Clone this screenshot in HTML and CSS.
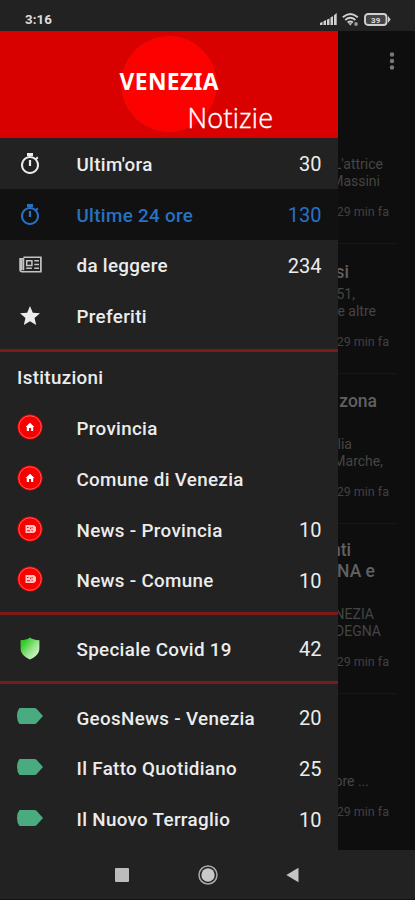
FILE: index.html
```
<!DOCTYPE html>
<html lang="it">
<head>
<meta charset="utf-8">
<title>Venezia Notizie</title>
<link rel="stylesheet" href="styles.css">
</head>
<body>
<svg class="defs" width="0" height="0">
  <defs>
    <linearGradient id="green" x1="0" y1="0" x2="1" y2="1"><stop offset=".2" stop-color="#35cb2b"/><stop offset=".6" stop-color="#a0e795"/><stop offset="1" stop-color="#e5ffdc"/></linearGradient>
    <symbol id="timer" viewBox="0 0 24 24"><path fill="currentColor" d="M15 1H9v3h6zm-4.100 13h2.200V8h-2.200zm8.130-6.610 1.420-1.420c-.43-.51-.9-.99-1.410-1.410l-1.420 1.420A8.960 8.960 0 0 0 12 4a9 9 0 1 0 7.030 3.390zM12 20a7 7 0 1 1 0-14 7 7 0 0 1 0 14z"/></symbol>
    <symbol id="paper" viewBox="0 0 24 18"><path fill="none" stroke="currentColor" stroke-width="1.800" d="M4.500 1.300H23v15.400H3a2 2 0 0 1-2-2V3h3.500v12"/><path fill="none" stroke="currentColor" stroke-width="1.600" d="M8 5h5.500v5H8zM16 5h5M16 9h5M7.500 13h6M16 13h5M2.700 4v11"/></symbol>
    <symbol id="star" viewBox="0 0 24 24"><path fill="currentColor" d="m12 17.270 6.180 3.730-1.640-7.030L22 9.240l-7.190-.61L12 2 9.190 8.630 2 9.240l5.460 4.730L5.820 21z"/></symbol>
    <symbol id="home" viewBox="0 0 26 26"><circle cx="13" cy="13" r="12.500" fill="#f60000"/><circle cx="13" cy="13" r="11.200" fill="none" stroke="#ff5a55" stroke-width="1"/><path fill="#fff" d="M13 8.800 8.600 12.900h1.200v4.100h2.200v-3h2v3h2.200v-4.100h1.200z"/></symbol>
    <symbol id="news" viewBox="0 0 26 26"><circle cx="13" cy="13" r="12.500" fill="#f60000"/><circle cx="13" cy="13" r="11.200" fill="none" stroke="#ff5a55" stroke-width="1"/><path fill="#ffc4c0" d="M8.500 9H17l2 2v4l-2 2H8.500z"/><path fill="#f60000" d="M10 11h1.500v1H10zM10 14.200h3v1h-3zM14.600 11h1v1.300h-1zM14.600 14h1v1.300h-1zM13 11.500h.8v1.500H13z"/></symbol>
    <symbol id="shield" viewBox="0 0 20 23"><path fill="url(#green)" d="M10 .5C8 2.300 4 3.300.6 3.300v8.200c0 5 4 8.500 9.400 11 5.400-2.500 9.400-6 9.400-11V3.300C16 3.300 12 2.300 10 .5z"/></symbol>
    <symbol id="tag" viewBox="0 0 26 16"><path fill="#4aab80" d="M2.500 0h15q1.300 0 2.200 1L26 8l-6.300 7q-.9 1-2.200 1h-15Q0 13 0 8t2.500-8z"/></symbol>
  </defs>
</svg>
<div class="phone">
  <header class="status">
    <span class="clock">3:16</span>
    <div class="indicators">
      <svg width="17" height="12" viewBox="0 0 17 12"><path fill="#d0d0d0" d="M0 12v-2l2.500-1.200V12zM3.500 12V8.300L6 7.100V12zM7 12V6.600l2.500-1.200V12zM10.500 12V4.600L13 3v9zM14 12V2.300L16.700 0v12z"/></svg>
      <svg width="17" height="13" viewBox="0 0 17 13"><g fill="none" stroke="#cecece" stroke-width="1.900"><path d="M.8 4.300Q8.300-2.200 15.800 4.300M3.200 7Q8.300 2.700 13.400 7M5.700 9.600q2.600-2.100 5.200 0"/></g><path fill="#cecece" d="m8.300 12.500-2-2.200h4z"/><circle cx="14" cy="11" r="1.900" fill="#999"/></svg>
      <svg width="27" height="13" viewBox="0 0 27 13"><rect x="1" y="1" width="21.500" height="11" rx="3" fill="#444" stroke="#d0d0d0" stroke-width="1.900"/><path fill="#d0d0d0" d="m24 3 2.700 3.500L24 10z"/><text x="11.700" y="9.900" text-anchor="middle" class="charge">39</text></svg>
    </div>
  </header>
  <div class="screen">
    <aside class="drawer">
      <div class="banner">
        <div class="disc"></div>
        <div class="brand">VENEZIA</div>
        <div class="subbrand">Notizie</div>
      </div>
      <nav>
        <a class="row"><svg class="ic big"><use href="#timer"/></svg><span class="label">Ultim'ora</span><span class="count">30</span></a>
        <a class="row active"><svg class="ic big"><use href="#timer"/></svg><span class="label">Ultime 24 ore</span><span class="count">130</span></a>
        <a class="row"><svg class="ic paper"><use href="#paper"/></svg><span class="label">da leggere</span><span class="count">234</span></a>
        <a class="row"><svg class="ic big"><use href="#star"/></svg><span class="label">Preferiti</span></a>
        <section>
          <h2>Istituzioni</h2>
          <a class="row"><svg class="ic round"><use href="#home"/></svg><span class="label">Provincia</span></a>
          <a class="row"><svg class="ic round"><use href="#home"/></svg><span class="label">Comune di Venezia</span></a>
          <a class="row"><svg class="ic round"><use href="#news"/></svg><span class="label">News - Provincia</span><span class="count">10</span></a>
          <a class="row"><svg class="ic round"><use href="#news"/></svg><span class="label">News - Comune</span><span class="count">10</span></a>
        </section>
        <section class="padded">
          <a class="row"><svg class="ic shield"><use href="#shield"/></svg><span class="label">Speciale Covid 19</span><span class="count">42</span></a>
        </section>
        <section class="padded">
          <a class="row"><svg class="ic tag"><use href="#tag"/></svg><span class="label">GeosNews - Venezia</span><span class="count">20</span></a>
          <a class="row"><svg class="ic tag"><use href="#tag"/></svg><span class="label">Il Fatto Quotidiano</span><span class="count">25</span></a>
          <a class="row"><svg class="ic tag"><use href="#tag"/></svg><span class="label">Il Nuovo Terraglio</span><span class="count">10</span></a>
        </section>
      </nav>
    </aside>
    <main class="feed">
      <div class="toolbar"><svg width="6" height="20" viewBox="0 0 6 20" fill="#777"><circle cx="3" cy="3.500" r="2.200"/><circle cx="3" cy="10" r="2.200"/><circle cx="3" cy="16.500" r="2.200"/></svg></div>
      <article class="first"><p class="e383">L'attrice</p><p class="e380">Massini</p><time>29 min fa</time></article>
      <article class="second"><h3 class="e349">si</h3><p class="e355">51,</p><p class="e376">e altre</p><time>29 min fa</time></article>
      <article class="third"><h3 class="e377 gap">zona</h3><p class="e352">lia</p><p class="e383">Marche,</p><time>29 min fa</time></article>
      <article class="fourth"><h3 class="e351">nti</h3><h3 class="e375 gap">NA e</h3><p class="e374">NEZIA</p><p class="e381">DEGNA</p><time>29 min fa</time></article>
      <article class="fifth"><p class="e369">ore ...</p><time>29 min fa</time></article>
    </main>
  </div>
  <footer class="softkeys">
    <svg width="14" height="14"><rect width="14" height="14" rx="1" fill="#bcbcbc"/></svg>
    <svg width="20" height="20" viewBox="0 0 20 20"><circle cx="10" cy="10" r="9" fill="none" stroke="#aaa" stroke-width="1.500"/><circle cx="10" cy="10" r="6.700" fill="#c8c8c8"/></svg>
    <svg width="13" height="16" viewBox="0 0 13 16"><path fill="#c4c4c4" d="M12.500.8v14.400L.3 8z"/></svg>
  </footer>
</div>
</body>
</html>
```

FILE: styles.css
```
* { box-sizing: border-box; }
body { margin: 0; background: #222; font-family: Roboto, sans-serif; color: #ececec; }
.defs { position: absolute; }
.phone { width: 415px; height: 900px; display: flex; flex-direction: column; overflow: hidden; background: #222; }

.status { height: 31px; flex: none; display: flex; justify-content: space-between; padding: 12px 24px 0 25px; }
.clock { font-size: 13.300px; line-height: 16px; font-weight: 700; color: #ddd; letter-spacing: .1px; }
.indicators { display: flex; gap: 5px; padding-top: 1px; }
.charge { font: 700 8px Roboto, sans-serif; fill: #ddd; }

.screen { height: 819px; flex: none; display: flex; overflow: hidden; }
.drawer { width: 338.400px; flex: none; background: #222; }

.banner { height: 107px; background: #d90000; position: relative; overflow: hidden; }
.disc { position: absolute; left: 121px; top: 5px; width: 96px; height: 96px; border-radius: 50%; background: #fd0000; border: 1px solid #e80e00; }
.brand { position: absolute; left: 119.500px; top: 36px; font: 700 22.800px/30px "Noto Sans", sans-serif; letter-spacing: .4px; color: #fff; }
.subbrand { position: absolute; left: 187.500px; top: 68.500px; font: 300 27.200px/36px "Open Sans", sans-serif; letter-spacing: .2px; color: #fff; -webkit-text-stroke: .4px #fff; }

.row { height: 50.800px; display: flex; align-items: center; padding-right: 17px; }
.row.active { background: #111; color: #2672c4; }
.ic { flex: none; display: block; }
.big { width: 24px; height: 24px; margin: 1px 31px 0 18px; }
.paper { width: 23px; height: 17px; margin: 0 31px 0 19px; color: #c4c4c4; }
.round { width: 26px; height: 26px; margin: -1px 30px 0 17px; }
.shield { width: 20px; height: 23px; margin: 0 33px 0 20px; }
.tag { width: 26px; height: 16px; margin: -2px 30px 0 17px; }
.label { flex: 1; padding-left: 3.500px; font-size: 18.800px; letter-spacing: .33px; font-weight: 500; line-height: 24px; padding-top: 3px; white-space: nowrap; }
.count { font-size: 20px; line-height: 24px; padding-top: 2px; }
section { border-top: 3px solid #7b1a18; }
section:first-of-type { margin-top: 8px; }
h2 { margin: 0; height: 50px; padding: 14px 0 0 17px; font-size: 18.800px; letter-spacing: .33px; line-height: 24px; font-weight: 500; }
section:first-of-type { padding-bottom: 7px; }
.padded { padding-top: 7.500px; padding-bottom: 7.500px; }

.feed { flex: 1; min-width: 0; background: #0e0e0e; overflow: hidden; }
.toolbar { height: 60px; display: flex; justify-content: flex-end; align-items: center; padding-right: 20px; }
article { display: flex; flex-direction: column; justify-content: flex-end; margin-right: 19px; padding-bottom: 23px; border-bottom: 1px solid #171717; }
.first { height: 153px; }
.second { height: 130px; }
.third { height: 149.500px; }
.fourth { height: 170.500px; }
.fifth { height: 149px; border-bottom: 0; }
article p, article h3, article time { margin: 0; display: flex; justify-content: flex-end; white-space: nowrap; }
article p { font-size: 14px; line-height: 17px; color: #454545; }
article h3 { font-size: 17.500px; line-height: 21px; font-weight: 500; color: #606060; margin-bottom: 3px; }
article h3:has(+ h3) { margin-bottom: 0; }
article h3.gap { margin-bottom: 24px; }
article time { font-size: 12.500px; line-height: 17px; margin-top: 13px; padding-right: 7px; color: #414141; }
.e349 { padding-right: 47px; }
.e351 { padding-right: 45px; }
.e352 { padding-right: 44px; }
.e355 { padding-right: 41px; }
.e369 { padding-right: 27px; }
.e374 { padding-right: 22px; }
.e375 { padding-right: 21px; }
.e376 { padding-right: 20px; }
.e377 { padding-right: 19px; }
.e380 { padding-right: 16px; }
.e381 { padding-right: 15px; }
.e383 { padding-right: 13px; }

.softkeys { height: 50px; flex: none; display: flex; align-items: center; padding-left: 115px; gap: 69px; border-bottom: 1px solid #171017; }
.softkeys svg:last-child { margin-left: -1px; }
```
